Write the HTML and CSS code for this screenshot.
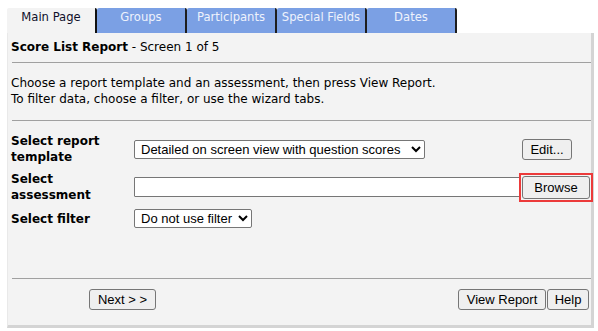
FILE: index.html
```html
<!DOCTYPE html>
<html>
<head>
    <meta charset="UTF-8">
    <title>Score List Report</title>
    <link rel="stylesheet" href="styles.css">
</head>
<body>
    <div class="wizard">
        <div class="tabs">
            <div class="tab active">Main Page</div>
            <div class="tab">Groups</div>
            <div class="tab">Participants</div>
            <div class="tab">Special Fields</div>
            <div class="tab">Dates</div>
        </div>
        <div class="panel">
            <div class="heading"><b>Score List Report</b> - Screen 1 of 5</div>
            <hr class="rule">
            <p class="intro">
                Choose a report template and an assessment, then press View Report.
                <br>To filter data, choose a filter, or use the wizard tabs.
            </p>
            <hr class="rule">
            <div class="form">
                <label class="label">Select report<br>template</label>
                <div class="field">
                    <select class="select template">
                        <option>Detailed on screen view with question scores</option>
                    </select>
                </div>
                <div class="action"><button class="btn edit">Edit...</button></div>

                <label class="label">Select<br>assessment</label>
                <div class="field"><input class="text" type="text"></div>
                <div class="action"><span class="highlight"><button class="btn browse">Browse</button></span></div>

                <label class="label">Select filter</label>
                <div class="field">
                    <select class="select">
                        <option>Do not use filter</option>
                    </select>
                </div>
                <div class="action"></div>
            </div>
            <div class="spacer"></div>
            <hr class="rule">
            <div class="footer">
                <button class="btn next">Next &gt; &gt;</button>
                <div class="footer-right">
                    <button class="btn view">View Report</button>
                    <button class="btn help">Help</button>
                </div>
            </div>
        </div>
    </div>
</body>
</html>
```

FILE: styles.css
```css
body {
    margin: 0;
    background: #fff;
    font-family: 'DejaVu Sans', Verdana, sans-serif;
    font-size: 11px;
    color: #000;
}
.wizard {
    padding: 8px 0 0 7px;
    width: 587px;
}
.tabs {
    display: flex;
    height: 25px;
}
.tab {
    width: 88px;
    border-right: 2px solid #1e1e1e;
    border-radius: 2px 2px 0 0;
    background: #7ba0e4;
    color: #eef2fc;
    text-align: center;
    line-height: 19px;
    font-size: 11.6px;
}
.tab.active {
    background: #f3f3f3;
    color: #10102a;
    border-right-color: #111;
}
.panel {
    background: #f3f3f3;
    border-right: 3px solid #d4d4d4;
    border-bottom: 3px solid #d4d4d4;
    border-left: 1px solid #e9e9e9;
    height: 292px;
    padding: 0 3px 0 3px;
    display: flex;
    flex-direction: column;
}
.heading {
    padding-top: 6px;
    line-height: 16px;
    font-size: 12px;
}
.rule {
    border: 0;
    border-top: 1px solid #a0a0a0;
    margin: 7px 0 0 1px;
    width: 579px;
}
.intro {
    margin: 12px 0 6px;
    line-height: 16px;
    font-size: 12px;
}
.form {
    margin-top: 12px;
    display: grid;
    grid-template-columns: 123px 386px auto;
    row-gap: 6px;
    align-items: center;
}
.label {
    font-weight: bold;
    line-height: 16px;
    font-size: 12px;
}
.select, .text, .btn {
    font-family: 'Liberation Sans', Arial, sans-serif;
    font-size: 13px;
}
.select {
    height: 19px;
    padding: 0 2px;
    border: 1px solid #767676;
    border-radius: 2px;
    background: #fff;
    color: #000;
}
.template {
    width: 291px;
}
.text {
    display: block;
    box-sizing: border-box;
    width: 386px;
    height: 20px;
    border: 1px solid #767676;
    border-radius: 1px;
    background: #fff;
}
.action {
    padding-left: 2px;
}
.btn {
    height: 21px;
    padding: 0;
    border: 1px solid #767676;
    border-radius: 3px;
    background: #efefef;
    color: #000;
}
.edit {
    width: 50px;
}
.highlight {
    display: inline-flex;
    margin-left: -3px;
    padding: 1px;
    border: 2px solid #ec3a3a;
}
.browse {
    width: 68px;
    height: 23px;
}
.spacer {
    flex: 1;
}
.rule + .footer {
    margin-top: 10px;
}
.footer {
    display: flex;
    justify-content: space-between;
    padding: 0 0 15px 78px;
    margin-right: -1px;
}
.next {
    width: 67px;
}
.footer-right {
    display: flex;
    gap: 1px;
}
.view {
    width: 88px;
}
.help {
    width: 42px;
}
```
